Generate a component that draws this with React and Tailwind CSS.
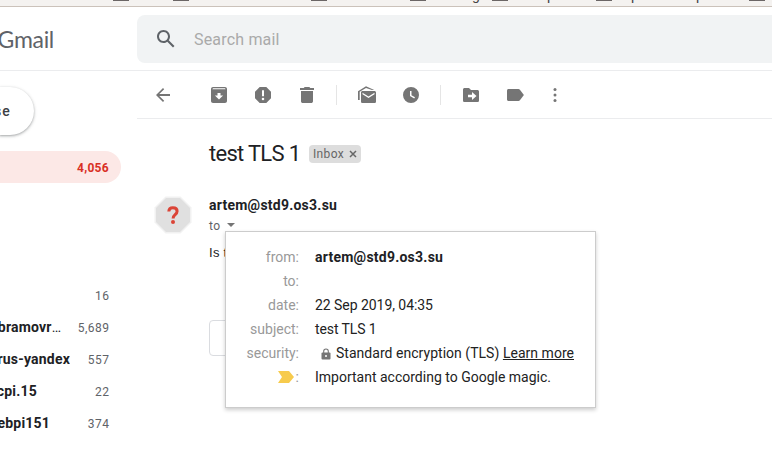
const folders = [
  { name: '', count: '16', box: 'w-[61px]' },
  { name: 'abramovr', dots: true, count: '5,689', box: 'w-[61px]' },
  { name: 'rus-yandex', count: '557', box: 'w-[70px]' },
  { name: 'cpi.15', count: '22', box: 'w-[37px]' },
  { name: 'ebpi151', count: '374', box: 'w-[50px]' },
];

function Icon({ children, className = '' }) {
  return (
    <svg viewBox="0 0 20 20" fill="currentColor" className={`size-5 shrink-0 ${className}`}>
      {children}
    </svg>
  );
}

function FolderEdge({ className }) {
  return <span className={`h-px w-4 shrink-0 bg-[#6b6666] ${className}`} />;
}

function Tail({ children, className }) {
  return (
    <span className={`-mt-[12px] w-2 shrink-0 text-[14px] leading-[14px] text-[#444] ${className}`}>
      {children}
    </span>
  );
}

function BookmarkBar() {
  return (
    <div className="flex h-[7px] shrink-0 items-start overflow-hidden border-b border-[#cbc2ba] bg-[#f4f2f0]">
      <FolderEdge className="ml-[113px]" />
      <FolderEdge className="ml-[44px]" />
      <FolderEdge className="ml-[122px]" />
      <FolderEdge className="ml-[83px]" />
      <Tail className="ml-[46px]">g</Tail>
      <FolderEdge className="ml-[12px]" />
      <Tail className="ml-[39px]">p</Tail>
      <FolderEdge className="ml-[41px]" />
      <Tail className="ml-[19px]">p</Tail>
      <Tail className="ml-[57px]">p</Tail>
      <FolderEdge className="ml-[45px]" />
    </div>
  );
}

function Header() {
  return (
    <header className="flex h-16 shrink-0 items-center border-b border-[#ebecee]">
      <div className="flex w-[54px] shrink-0 justify-end overflow-hidden">
        <span className="font-['Lato'] text-[23px] leading-8 tracking-[-0.3px] text-[#5f6368]">Gmail</span>
      </div>
      <div className="ml-[83px] flex h-12 flex-1 items-center rounded-l-lg bg-[#f1f3f4] pl-[17px]">
        <svg viewBox="0 0 24 24" fill="#5f6368" className="size-6 shrink-0">
          <path d="M20.49 19l-5.73-5.73C15.53 12.2 16 10.91 16 9.5 16 5.91 13.09 3 9.5 3S3 5.91 3 9.5 5.91 16 9.5 16c1.41 0 2.7-.47 3.77-1.24L19 20.49 20.49 19zM5 9.5C5 7.01 7.01 5 9.5 5S14 7.01 14 9.5 11.99 14 9.5 14 5 11.99 5 9.5z" />
        </svg>
        <span className="ml-[16px] pt-[2px] text-[16px] tracking-[0.18px] text-[#aaa]">Search mail</span>
      </div>
    </header>
  );
}

function Sidebar() {
  return (
    <aside className="flex w-[137px] shrink-0 flex-col overflow-hidden">
      <div className="mt-4 flex h-12 w-[34px] items-center justify-end rounded-r-full bg-white pr-[23px] text-[14px] font-medium tracking-[1.2px] text-[#3c4043] shadow-[0_1px_2px_0_rgba(60,64,67,0.30),0_1px_3px_1px_rgba(60,64,67,0.15)]">
        <span className="pt-px">Compose</span>
      </div>
      <div className="mt-4 flex h-8 w-[121px] items-center justify-end rounded-r-full bg-[#fce8e6] pr-3 pt-px text-[12px] font-bold tracking-[0.3px] text-[#d93025]">
        4,056
      </div>
      <div className="mt-[97px] flex w-[109px] flex-col">
        {folders.map((f) => (
          <div key={f.count} className="flex h-8 items-center justify-between">
            <span className={`-mt-[2px] flex justify-end overflow-hidden whitespace-nowrap text-[14px] font-bold tracking-[0.2px] text-[#202124] ${f.box}`}>
              {f.name}
              {f.dots && <span className="font-normal tracking-normal">…</span>}
            </span>
            <span className="-mr-[0.5px] text-[12px] tracking-[0.5px] text-[#5f6368]">{f.count}</span>
          </div>
        ))}
      </div>
    </aside>
  );
}

function Toolbar() {
  return (
    <div className="flex h-12 shrink-0 items-center border-b border-[#ebecee] pl-4 text-[#757575]">
      <Icon>
        <path d="M17 9.1H6.3l4.9-4.9L10 3 3 10l7 7 1.2-1.2-4.9-4.9H17z" />
      </Icon>
      <Icon className="ml-9">
        <path fillRule="evenodd" d="M4 2h12c1.1 0 2 .9 2 2v12c0 1.100-.9 2-2 2H4c-1.100 0-2-.9-2-2V4c0-1.100.9-2 2-2zM4 3.300 3.400 4.300h13.200L16 3.300zM8.500 7.900v2.600H5.900l4.100 4 4.100-4h-2.600V7.900z" />
      </Icon>
      <Icon className="ml-6">
        <path fillRule="evenodd" d="M6.700 2h6.600L18 6.700v6.600L13.300 18H6.700L2 13.300V6.700zM9 5.300v6h2v-6zM10 12.700a1.300 1.300 0 1 0 0 2.600 1.300 1.300 0 0 0 0-2.600z" />
      </Icon>
      <Icon className="ml-6">
        <path d="M4 6h12v10.200c0 1-.8 1.800-1.800 1.800H5.800c-1 0-1.800-.8-1.800-1.800zM3 3h3.700l1-1h4.600l1 1H17v2H3z" />
      </Icon>
      <span className="ml-[19px] h-5 w-px bg-[#e5e5e5]" />
      <Icon className="ml-5">
        <path fillRule="evenodd" d="M1 15V6.200L9 1.300 17.200 5H15L9 2.900 2.700 6.800V15zM5.600 6h11.800c.9 0 1.600.7 1.600 1.600v8.800c0 .9-.7 1.600-1.600 1.600H5.600c-.9 0-1.600-.7-1.600-1.600V7.600C4 6.700 4.700 6 5.600 6zM5.500 7.800v1.500l6 3.800 6-3.800V7.800l-6 3.600z" />
      </Icon>
      <Icon className="ml-6">
        <path fillRule="evenodd" d="M10 2a8 8 0 1 0 0 16 8 8 0 0 0 0-16zM9 6v5l4.200 2.500.8-1.200-3.500-2.100V6z" />
      </Icon>
      <span className="ml-[19px] h-5 w-px bg-[#e5e5e5]" />
      <Icon className="ml-5">
        <path fillRule="evenodd" d="M3.600 3H8l2 2h6.400c.9 0 1.600.7 1.600 1.600v8.800c0 .9-.7 1.600-1.600 1.600H3.600c-.9 0-1.600-.7-1.600-1.600V4.600C2 3.700 2.700 3 3.600 3zM7 9.700v2.600h4V15l4.500-4L11 7v2.700z" />
      </Icon>
      <Icon className="ml-6">
        <path d="M3.500 4h10c.6 0 1 .2 1.400.7l4 5.300-4 5.300c-.4.500-.8.700-1.400.7h-10C2.700 16 2 15.300 2 14.500v-9C2 4.700 2.700 4 3.500 4z" />
      </Icon>
      <Icon className="ml-5">
        <circle cx="10" cy="4.500" r="1.500" />
        <circle cx="10" cy="10" r="1.500" />
        <circle cx="10" cy="15.500" r="1.500" />
      </Icon>
    </div>
  );
}

function Row({ label, children }) {
  return (
    <div className="flex h-6 items-center">
      <span className="flex w-[73px] shrink-0 items-center justify-end text-[#999]">{label}</span>
      <span className="ml-4 flex items-center whitespace-nowrap text-[#222]">{children}</span>
    </div>
  );
}

function DetailsPopup() {
  return (
    <div className="absolute left-[16px] top-[36px] z-10 h-[177px] w-[371px] border border-[#ccc] bg-white pt-[13px] text-[14px] shadow-[0_2px_4px_rgba(0,0,0,0.2)]">
      <Row label="from:">
        <b className="tracking-[0.24px] text-[#202124]">artem@std9.os3.su</b>
      </Row>
      <Row label="to:" />
      <Row label="date:">
        <span className="tracking-[-0.05px]">22 Sep 2019, 04:35</span>
      </Row>
      <Row label="subject:">
        <span className="tracking-[-0.1px]">test TLS 1</span>
      </Row>
      <Row label="security:">
        <svg viewBox="0 0 10 12" className="ml-[6px] mr-[5px] mt-px h-3 w-[10px]">
          <path d="M2.700 5V3.300a2.300 2.300 0 0 1 4.600 0V5" fill="none" stroke="#757575" strokeWidth="1.100" />
          <rect x=".5" y="4.600" width="9" height="6.900" rx="1" fill="#757575" />
          <circle cx="5" cy="8" r="1" fill="#fff" />
        </svg>
        <span className="tracking-[0.03px]">
          Standard encryption (TLS) <span className="underline">Learn more</span>
        </span>
      </Row>
      <Row
        label={
          <>
            <svg viewBox="0 0 16 12" className="mr-[2px] h-3 w-4">
              <path d="M0 0h11l5 6-5 6H0l4-6z" fill="#f7cb4d" />
            </svg>
            :
          </>
        }
      >
        Important according to Google magic.
      </Row>
    </div>
  );
}

function Message() {
  return (
    <section className="flex flex-col">
      <div className="mt-[19px] flex h-8 items-center pl-[72px]">
        <h1 className="w-[91px] whitespace-nowrap text-[22px] leading-8 tracking-[-0.7px] text-[#202124]">test TLS 1</h1>
        <span className="ml-[9px] flex h-[18px] w-[52px] items-center rounded bg-[#ddd] pl-1 text-[12px] tracking-[0.35px] text-[#666]">
          Inbox
          <svg viewBox="0 0 8 8" className="ml-[5px] size-2" stroke="#666" strokeWidth="1.500">
            <path d="M1 1l6 6M7 1L1 7" />
          </svg>
        </span>
      </div>
      <div className="mt-[25px] flex">
        <svg viewBox="0 0 40 40" className="ml-4 size-10 shrink-0">
          <path d="M12.500 1.500h15l11 11v15l-11 11h-15l-11-11v-15z" fill="#f1f1f1" />
          <path d="M13 3h14l10 10v14L27 37H13L3 27V13z" fill="#e0e0e0" />
          <path d="M15.800 16.500C15.900 14 17.300 12.700 19.900 12.700c2.600 0 4.200 1.400 4.200 3.600 0 3.500-4 3.400-4 7.200" fill="none" stroke="#db4437" strokeWidth="3" />
          <circle cx="20" cy="27" r="2" fill="#db4437" />
        </svg>
        <div className="relative ml-4 flex flex-col text-[#202124]">
          <b className="text-[14px] leading-5 tracking-[0.24px]">artem@std9.os3.su</b>
          <div className="flex h-5 items-center text-[12px] tracking-[0.4px] text-[#5f6368]">
            <span className="pt-px">to</span>
            <span className="ml-[7px] border-x-[4px] border-t-[4px] border-x-transparent border-t-[#757575]" />
          </div>
          <p className="mt-[8px] font-['Liberation_Sans'] text-[13px] leading-5 tracking-[0.3px] text-[#222]">Is this</p>
          <div className="mt-[57px] h-9 w-[104px] rounded border border-[#dadce0]" />
          <DetailsPopup />
        </div>
      </div>
    </section>
  );
}

export default function App() {
  return (
    <div className="flex h-[458px] w-[772px] flex-col overflow-hidden bg-white font-['Roboto',sans-serif]">
      <BookmarkBar />
      <Header />
      <div className="flex min-h-0 flex-1">
        <Sidebar />
        <main className="flex min-w-0 flex-1 flex-col">
          <Toolbar />
          <Message />
        </main>
      </div>
    </div>
  );
}
